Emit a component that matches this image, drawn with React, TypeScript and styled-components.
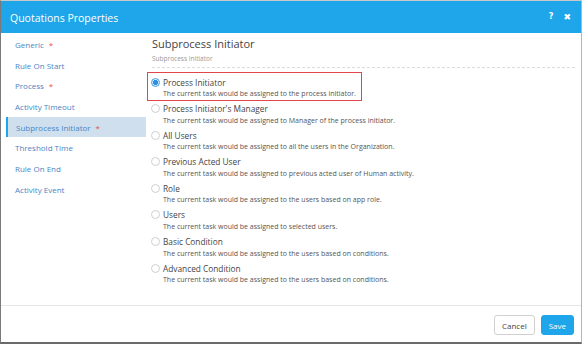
import React, { useState } from "react";
import styled, { createGlobalStyle } from "styled-components";

const GlobalStyle = createGlobalStyle`
  html, body {
    margin: 0;
    padding: 0;
    background: #ffffff;
    font-family: "Open Sans", "Noto Sans", sans-serif;
  }
  * { box-sizing: border-box; }
`;

const navItems = [
  { label: "Generic", required: true },
  { label: "Rule On Start", required: false },
  { label: "Process", required: true },
  { label: "Activity Timeout", required: false },
  { label: "Subprocess Initiator", required: true },
  { label: "Threshold Time", required: false },
  { label: "Rule On End", required: false },
  { label: "Activity Event", required: false },
];

const options = [
  { title: "Process Initiator", desc: "The current task would be assigned to the process initiator." },
  { title: "Process Initiator's Manager", desc: "The current task would be assigned to Manager of the process initiator." },
  { title: "All Users", desc: "The current task would be assigned to all the users in the Organization." },
  { title: "Previous Acted User", desc: "The current task would be assigned to previous acted user of Human activity." },
  { title: "Role", desc: "The current task would be assigned to the users based on app role." },
  { title: "Users", desc: "The current task would be assigned to selected users." },
  { title: "Basic Condition", desc: "The current task would be assigned to the users based on conditions." },
  { title: "Advanced Condition", desc: "The current task would be assigned to the users based on conditions." },
];

const App: React.FC = () => {
  const [active] = useState("Subprocess Initiator");
  const [selected, setSelected] = useState(0);

  return (
    <>
      <GlobalStyle />
      <Dialog>
        <Header>
          <Title>Quotations Properties</Title>
          <HeaderActions>
            <HeaderIcon>?</HeaderIcon>
            <HeaderIcon $big>✖</HeaderIcon>
          </HeaderActions>
        </Header>

        <Body>
          <Sidebar>
            {navItems.map((item) => (
              <NavItem key={item.label} $active={item.label === active}>
                {item.label}
                {item.required && <Star>*</Star>}
              </NavItem>
            ))}
          </Sidebar>

          <Content>
            <SectionTitle>Subprocess Initiator</SectionTitle>
            <SectionSub>Subprocess Initiator</SectionSub>

            <OptionList>
              {options.map((opt, i) => (
                <Option key={opt.title} $highlight={i === 0} onClick={() => setSelected(i)}>
                  <OptionHead>
                    <Radio $checked={i === selected} />
                    <OptionTitle>{opt.title}</OptionTitle>
                  </OptionHead>
                  <OptionDesc>{opt.desc}</OptionDesc>
                </Option>
              ))}
            </OptionList>
          </Content>
        </Body>

        <Footer>
          <CancelButton>Cancel</CancelButton>
          <SaveButton>Save</SaveButton>
        </Footer>
      </Dialog>
    </>
  );
};

export default App;

/* ---------------- Styled Components ---------------- */

const Dialog = styled.div`
  width: 582px;
  height: 344px;
  display: flex;
  flex-direction: column;
  background: #fff;
  border-top: 1px solid #c8c8c8;
  border-left: 1px solid #7a7a7a;
  border-right: 1px solid #b5b5b5;
  border-bottom: 2px solid #6a6a6a;
`;

const Header = styled.div`
  height: 32px;
  flex-shrink: 0;
  background: #1ea5ea;
  display: flex;
  align-items: center;
  justify-content: space-between;
  padding: 0 10px 0 9px;
`;

const Title = styled.div`
  color: #fff;
  font-size: 10.5px;
  font-weight: 400;
  padding-top: 1px;
`;

const HeaderActions = styled.div`
  display: flex;
  align-items: center;
  gap: 10px;
`;

const HeaderIcon = styled.span<{ $big?: boolean }>`
  color: #fff;
  font-family: "DejaVu Sans", sans-serif;
  font-weight: 700;
  font-size: ${(p) => (p.$big ? "9px" : "8px")};
  line-height: 1;
`;

const Body = styled.div`
  flex: 1;
  display: flex;
  min-height: 0;
`;

const Sidebar = styled.div`
  width: 145px;
  flex-shrink: 0;
  padding: 1px 0 0 5px;
  display: flex;
  flex-direction: column;
`;

const NavItem = styled.div<{ $active: boolean }>`
  height: 20.7px;
  display: flex;
  align-items: center;
  font-size: 8px;
  color: #4a86c5;
  padding-left: ${(p) => (p.$active ? "8px" : "7px")};
  background: ${(p) => (p.$active ? "#cfdfee" : "transparent")};
  border-left: 2px solid ${(p) => (p.$active ? "#1ea5ea" : "transparent")};
`;

const Star = styled.span`
  color: #e8504a;
  margin-left: 5px;
  font-size: 8px;
`;

const Content = styled.div`
  flex: 1;
  padding: 3px 6px 0 6px;
  display: flex;
  flex-direction: column;
`;

const SectionTitle = styled.div`
  font-size: 11px;
  color: #444;
  height: 16px;
  line-height: 16px;
`;

const SectionSub = styled.div`
  font-size: 6.5px;
  color: #999;
  padding: 2px 0 4px 0;
  border-bottom: 1px dashed #dcdcdc;
`;

const OptionList = styled.div`
  display: flex;
  flex-direction: column;
  padding-top: 4px;
`;

const Option = styled.div<{ $highlight: boolean }>`
  width: ${(p) => (p.$highlight ? "215px" : "auto")};
  height: ${(p) => (p.$highlight ? "29px" : "26.6px")};
  margin-bottom: ${(p) => (p.$highlight ? "-2.4px" : "0")};
  margin-left: -5px;
  padding: ${(p) => (p.$highlight ? "3px 0 0 3px" : "4px 0 0 4px")};
  border: ${(p) => (p.$highlight ? "1px solid #e0474c" : "none")};
  cursor: pointer;
`;

const OptionHead = styled.div`
  display: flex;
  align-items: center;
  height: 12px;
`;

const Radio = styled.span<{ $checked: boolean }>`
  width: 9px;
  height: 9px;
  border-radius: 50%;
  flex-shrink: 0;
  margin-right: 3px;
  border: 1px solid ${(p) => (p.$checked ? "#4a9fe0" : "#cfcfcf")};
  background: ${(p) =>
    p.$checked ? "radial-gradient(circle, #2f8fe0 0 2.4px, #d9ebfa 2.6px)" : "#fff"};
`;

const OptionTitle = styled.span`
  font-size: 8.3px;
  color: #444;
`;

const OptionDesc = styled.div`
  font-size: 7px;
  color: #555;
  padding-left: 12px;
  margin-top: 1px;
`;

const Footer = styled.div`
  height: 37px;
  flex-shrink: 0;
  border-top: 1px solid #e6e6e6;
  display: flex;
  align-items: center;
  justify-content: flex-end;
  gap: 6px;
  padding: 2px 7px 0 0;
`;

const CancelButton = styled.button`
  height: 20px;
  padding: 0 7px;
  font-family: "Open Sans", sans-serif;
  font-size: 8px;
  color: #444;
  background: #fff;
  border: 1px solid #d0d0d0;
  border-radius: 3px;
`;

const SaveButton = styled.button`
  height: 20px;
  padding: 0 7px;
  font-family: "Open Sans", sans-serif;
  font-size: 8px;
  color: #fff;
  background: #1ea5ea;
  border: 1px solid #1ea5ea;
  border-radius: 3px;
`;
